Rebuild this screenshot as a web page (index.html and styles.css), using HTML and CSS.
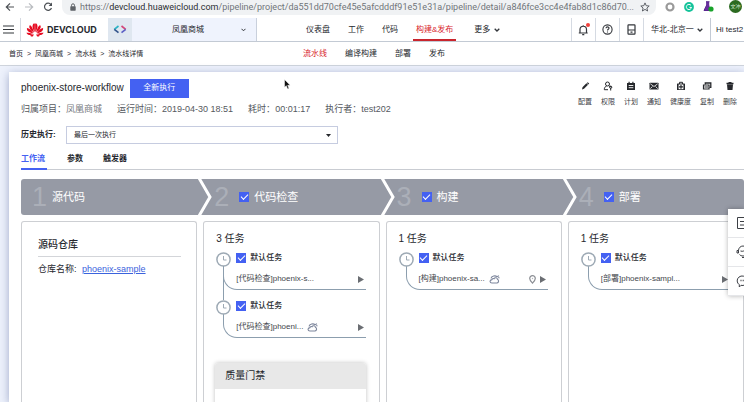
FILE: index.html
```html
<!DOCTYPE html>
<html lang="zh-CN">
<head>
<meta charset="utf-8">
<meta name="viewport" content="width=device-width, initial-scale=1">
<title>phoenix-store-workflow</title>
<link rel="stylesheet" href="styles.css">
</head>
<body>
<div class="app">
  <div class="browser">
    <div class="browser-nav">
      <button class="plain" aria-label="后退"><svg width="10" height="10" viewBox="0 0 10 10"><path d="M9 5H1.500M5 1.300 1.300 5 5 8.700" fill="none" stroke="#4c5055" stroke-width="1.200"/></svg></button>
      <button class="plain" aria-label="前进"><svg width="10" height="10" viewBox="0 0 10 10"><path d="M1 5H8.500M5 1.300 8.700 5 5 8.700" fill="none" stroke="#b9bcc0" stroke-width="1.200"/></svg></button>
      <button class="plain" aria-label="刷新"><svg width="10" height="10" viewBox="0 0 10 10"><path d="M8 2.600A3.600 3.600 0 1 0 8.500 6" fill="none" stroke="#4c5055" stroke-width="1.200"/><path d="M9 .6V4H5.600Z" fill="#4c5055"/></svg></button>
    </div>
    <div class="address">
      <svg width="6" height="8" viewBox="0 0 6 8"><path d="M1.500 3.500V2.300a1.500 1.500 0 0 1 3 0v1.200" fill="none" stroke="#5f6368"/><rect x=".3" y="3.200" width="5.400" height="4.500" rx=".6" fill="#5f6368"/></svg>
      <span class="url">https://<b>devcloud.huaweicloud.com</b>/pipeline/project/da551dd70cfe45e5afcdddf91e51e31a/pipeline/detail/a846fce3cc4e4fab8d1c86d70...</span>
      <svg class="star" width="10" height="10" viewBox="0 0 10 10"><path d="M5 .9 6.200 3.700 9.200 4 6.900 6 7.600 9 5 7.400 2.400 9 3.100 6 .8 4 3.800 3.700Z" fill="none" stroke="#50545a" stroke-width=".9"/></svg>
    </div>
    <div class="extensions">
      <svg width="10" height="10" viewBox="0 0 10 10"><circle cx="5" cy="5" r="3.500" fill="none" stroke="#9a9a9a" stroke-width="2.200"/></svg>
      <svg width="10" height="10" viewBox="0 0 10 10"><circle cx="5" cy="5" r="4.900" fill="#15c39a"/><path d="M7 3.400A2.600 2.600 0 1 0 7.500 5.400H5.500" fill="none" stroke="#fff" stroke-width="1"/></svg>
      <svg width="11" height="11" viewBox="0 0 11 11"><path d="M3 .7H6.500M3.700 1V4L1 9.500H7L5.700 4V1" fill="#6b2fa0" stroke="#5b2590"/><circle cx="8" cy="8" r="2.600" fill="#18a32a"/></svg>
      <span class="avatar">文冲</span>
    </div>
  </div>

  <header class="topbar">
    <button class="plain menu" aria-label="菜单"><svg width="11" height="9" viewBox="0 0 11 9"><path d="M0 1H11M0 4.500H11M0 8H11" stroke="#33363b" stroke-width="1.200"/></svg></button>
    <a class="brand" href="#">
      <svg width="18" height="14" viewBox="0 0 18 14"><g fill="#e60a20"><path d="M8.700 9.300C6.500 6 5.600 2.500 7.700.6c.5-.2 1.200-.2 1.200.4Z"/><path d="M9.300 9.300C11.500 6 12.400 2.500 10.300.6c-.5-.2-1.200-.2-1.200.4Z"/><path d="M8 9.700C4.400 7.500 2.500 4.500 3.600 2.500 5 1.500 7 6 8 9.700Z"/><path d="M10 9.700C13.600 7.500 15.500 4.500 14.400 2.500 13 1.500 11 6 10 9.700Z"/><path d="M7.300 10.300C2.500 9.800.4 7.200 1 5 3 5 5.500 7.500 7.300 10.300Z"/><path d="M10.700 10.300C15.500 9.800 17.600 7.200 17 5 15 5 12.500 7.500 10.700 10.300Z"/><path d="M7.300 11C4 13.200 1.500 11.700.4 9.700c2 0 4.800.4 6.900 1.300Z"/><path d="M10.700 11c3.300 2.200 5.800.7 6.900-1.300-2 0-4.800.4-6.900 1.300Z"/><path d="M7.900 11.300 7 13.200C5.800 14 4.500 13 4 12.400Z"/><path d="m10.100 11.300.9 1.900c1.200.8 2.500-.2 3-.8Z"/></g></svg>
      <span>DEVCLOUD</span>
    </a>
    <span class="product"><svg width="14" height="9" viewBox="0 0 14 9" fill="none" stroke-width="1.700"><path d="M5.500 1 1.300 4.300" stroke="#2bb3c4"/><path d="M1.300 4.300 5.500 7.600" stroke="#33558c"/><path d="M8.500 1 12.700 4.300" stroke="#d4467a"/><path d="M12.700 4.300 8.500 7.600" stroke="#5c5fc4"/></svg></span>
    <label class="picker project">
      <select aria-label="项目"><option>凤凰商城</option></select>
      <svg width="5" height="4" viewBox="0 0 5 4"><path d="M.5.8 2.500 2.800 4.500.8" fill="none" stroke="#33363b"/></svg>
    </label>
    <nav class="mainnav">
      <a href="#">仪表盘</a><a href="#">工作</a><a href="#">代码</a><a class="active" href="#">构建&amp;发布</a>
      <a class="more" href="#">更多 <svg width="6" height="4" viewBox="0 0 6 4"><path d="M.7.700 3 3 5.300.7" fill="none" stroke="#33363b" stroke-width="1.300"/></svg></a>
    </nav>
    <div class="tools">
      <button class="plain tool" aria-label="消息"><svg width="11" height="12" viewBox="0 0 11 12"><path d="M.8 9H9.700M2 9V5.500a3.200 3.200 0 0 1 6.500 0V9M4.200 10.700H6.300M5.200 1.200v1" fill="none" stroke="#33363b" stroke-width="1.200"/></svg><i class="dot"></i></button>
      <button class="plain tool" aria-label="帮助"><svg width="11" height="11" viewBox="0 0 11 11" fill="none" stroke="#33363b"><circle cx="5.500" cy="5.500" r="4.600" stroke-width="1.100"/><path d="M4 4.300C4 2.400 7 2.500 7 4.200 7 5.300 5.500 5.300 5.500 6.500M5.500 7.400V8.400" stroke-width="1.100"/></svg></button>
      <button class="plain tool" aria-label="移动端"><svg width="9" height="11" viewBox="0 0 9 11" fill="none" stroke="#33363b" stroke-width="1.200"><rect x="1" y=".8" width="7" height="9.300" rx=".6"/><path d="M1 6H8M3.500 8.200H5.500"/></svg></button>
      <label class="picker region">
        <select aria-label="区域"><option>华北-北京一</option></select>
        <svg width="6" height="4" viewBox="0 0 6 4"><path d="M.7.700 3 3 5.300.7" fill="none" stroke="#33363b" stroke-width="1.300"/></svg>
      </label>
      <a class="user" href="#">Hi test2</a>
    </div>
  </header>

  <div class="subbar">
    <nav class="crumbs"><a href="#">首页</a><span>&gt;</span><a href="#">凤凰商城</a><span>&gt;</span><a href="#">流水线</a><span>&gt;</span><span>流水线详情</span></nav>
    <nav class="subnav"><a class="active" href="#">流水线</a><a href="#">编译构建</a><a href="#">部署</a><a href="#">发布</a></nav>
  </div>

  <main class="sheet">
    <div class="heading">
      <div class="summary">
        <div class="titlebar"><h1>phoenix-store-workflow</h1><button class="primary">全新执行</button></div>
        <dl class="meta">
          <div><dt>归属项目：</dt><dd class="soft">凤凰商城</dd></div>
          <div><dt>运行时间：</dt><dd>2019-04-30 18:51</dd></div>
          <div><dt>耗时：</dt><dd>00:01:17</dd></div>
          <div><dt>执行者：</dt><dd>test202</dd></div>
        </dl>
      </div>
      <div class="actions">
        <button class="plain"><svg viewBox="0 0 10 10"><path d="M2 8.500 2.500 6.300 6.400 2.300 8 3.800 4 7.800ZM6.900 1.900 7.700 1.200 9.200 2.600 8.400 3.400Z" fill="#26282c"/></svg>配置</button>
        <button class="plain"><svg viewBox="0 0 10 10" fill="none" stroke="#26282c"><circle cx="4.500" cy="3" r="2"/><path d="M5 8.700H1.300C1.300 6.500 2.300 5.400 3.500 5.200M6 5 8.500 6"/><circle cx="7.700" cy="6.200" r="1.100"/><path d="M7.700 7V9.500"/></svg>权限</button>
        <button class="plain"><svg viewBox="0 0 10 10"><path d="M1 2H2.500V.8H3.700V2H6.300V.8H7.500V2H9V9H1Z" fill="#26282c"/><path d="M2.700 4.500H7.300M2.700 6.700H7.300" stroke="#fff" stroke-width=".9"/></svg>计划</button>
        <button class="plain"><svg viewBox="0 0 10 10"><rect x=".5" y="1.800" width="9" height="6.700" rx=".5" fill="#26282c"/><path d="M1.300 2.800 5 5.500 8.700 2.800M1.300 7.600 3.500 5.500M8.700 7.600 6.500 5.500" fill="none" stroke="#fff" stroke-width=".8"/></svg>通知</button>
        <button class="plain"><svg viewBox="0 0 10 10"><path d="M3.500 3V1.300H6.500V3" fill="none" stroke="#26282c"/><rect x="1" y="2.500" width="8" height="6.500" rx=".6" fill="#26282c"/><rect x="2.600" y="3.500" width="4.800" height="4.700" fill="#fff"/><path d="M5 3.900V7.800M3 5.800H7" stroke="#26282c" stroke-width="1.200"/></svg>健康度</button>
        <button class="plain"><svg viewBox="0 0 10 10" fill="none" stroke="#26282c"><path d="M3.300 3.500V2H8.800V6.400H7.500" stroke-width="1.300"/><path d="M1.500 4H7V8H1.500ZM2.500 6H6" stroke-width="1.200"/></svg>复制</button>
        <button class="plain"><svg viewBox="0 0 10 10"><path d="M1.500 1.800H3.500V1H6.500V1.800H8.500V3.200H1.500ZM2 3.600H8L7.500 9H2.500Z" fill="#26282c"/></svg>删除</button>
      </div>
    </div>

    <div class="history">
      <label for="history">历史执行:</label>
      <div class="picker dropdown">
        <select id="history"><option>最后一次执行</option></select>
        <svg width="5" height="3" viewBox="0 0 5 3"><path d="M0 0H5L2.500 3Z" fill="#26282c"/></svg>
      </div>
    </div>

    <nav class="tabs"><a class="active" href="#">工作流</a><a href="#">参数</a><a href="#">触发器</a></nav>

    <div class="board">
      <div class="stages">
        <div class="stage"><span class="num">1</span><span class="name">源代码</span></div>
        <div class="stage"><svg class="chevron" width="15" height="36" viewBox="0 0 15 36"><path d="M2 -1 13 18 2 37" fill="none" stroke="#fff" stroke-width="3"/></svg><span class="num">2</span><label class="name"><input type="checkbox" checked>代码检查</label></div>
        <div class="stage"><svg class="chevron" width="15" height="36" viewBox="0 0 15 36"><path d="M2 -1 13 18 2 37" fill="none" stroke="#fff" stroke-width="3"/></svg><span class="num">3</span><label class="name"><input type="checkbox" checked>构建</label></div>
        <div class="stage"><svg class="chevron" width="15" height="36" viewBox="0 0 15 36"><path d="M2 -1 13 18 2 37" fill="none" stroke="#fff" stroke-width="3"/></svg><span class="num">4</span><label class="name"><input type="checkbox" checked>部署</label></div>
      </div>
      <div class="columns">
        <section class="column source">
          <h2>源码仓库</h2>
          <p>仓库名称: <a href="#">phoenix-sample</a></p>
        </section>

        <section class="column">
          <h3>3 任务</h3>
          <div class="task chained">
            <svg class="clock" viewBox="0 0 15 15"><circle cx="7.500" cy="7.500" r="6.600"/><path d="M7.500 4V8H10.500"/></svg>
            <label class="task-title"><input type="checkbox" checked>默认任务</label>
            <div class="step"><span>[代码检查]phoenix-s...</span><button class="plain play" aria-label="执行"><svg width="6" height="7" viewBox="0 0 6 7"><path d="M0 0 6 3.500 0 7Z" fill="#6b6e73"/></svg></button></div>
          </div>
          <div class="task">
            <svg class="clock" viewBox="0 0 15 15"><circle cx="7.500" cy="7.500" r="6.600"/><path d="M7.500 4V8H10.500"/></svg>
            <label class="task-title"><input type="checkbox" checked>默认任务</label>
            <div class="step"><span>[代码检查]phoeni...</span><svg width="11" height="9" viewBox="0 0 11 9" fill="none" stroke="#7d869c" stroke-width="1.100"><path d="M3 8H8A2 2 0 0 0 8.500 4.300C8.200 2.400 5.600 2.200 5 3.800 3.800 3.200 3.100 3.900 3 4.600.3 5 .5 7.900 3 8ZM2 3.300C2.500.8 6.500.300 8 1.700L10 .8M9.200 2.500 10.500 3"/></svg><button class="plain play" aria-label="执行"><svg width="6" height="7" viewBox="0 0 6 7"><path d="M0 0 6 3.500 0 7Z" fill="#6b6e73"/></svg></button></div>
          </div>
          <div class="gate"><h4>质量门禁</h4></div>
        </section>

        <section class="column">
          <h3>1 任务</h3>
          <div class="task">
            <svg class="clock" viewBox="0 0 15 15"><circle cx="7.500" cy="7.500" r="6.600"/><path d="M7.500 4V8H10.500"/></svg>
            <label class="task-title"><input type="checkbox" checked>默认任务</label>
            <div class="step"><span>[构建]phoenix-sa...</span><svg width="11" height="9" viewBox="0 0 11 9" fill="none" stroke="#7d869c" stroke-width="1.100"><path d="M3 8H8A2 2 0 0 0 8.500 4.300C8.200 2.400 5.600 2.200 5 3.800 3.800 3.200 3.100 3.900 3 4.600.3 5 .5 7.900 3 8ZM2 3.300C2.500.8 6.500.300 8 1.700L10 .8M9.200 2.500 10.500 3"/></svg><svg class="pin" width="7" height="9" viewBox="0 0 7 9"><path d="M3.500 8.200C1.800 6.400.7 5 .7 3.500a2.800 2.800 0 0 1 5.600 0C6.300 5 5.200 6.400 3.500 8.200Z" fill="none" stroke="#8b8e94" stroke-width="1.200"/><circle cx="3.500" cy="3.500" r=".7" fill="#b5b8bd"/></svg><button class="plain play" aria-label="执行"><svg width="6" height="7" viewBox="0 0 6 7"><path d="M0 0 6 3.500 0 7Z" fill="#6b6e73"/></svg></button></div>
          </div>
        </section>

        <section class="column">
          <h3>1 任务</h3>
          <div class="task">
            <svg class="clock" viewBox="0 0 15 15"><circle cx="7.500" cy="7.500" r="6.600"/><path d="M7.500 4V8H10.500"/></svg>
            <label class="task-title"><input type="checkbox" checked>默认任务</label>
            <div class="step"><span>[部署]phoenix-sampl...</span><button class="plain play" aria-label="执行"><svg width="6" height="7" viewBox="0 0 6 7"><path d="M0 0 6 3.500 0 7Z" fill="#6b6e73"/></svg></button></div>
          </div>
        </section>
      </div>
    </div>
  </main>

  <aside class="float">
    <button class="plain" aria-label="反馈"><svg width="14" height="14" viewBox="0 0 14 14" fill="none" stroke="#3c3f45"><path d="M12.500 1.500H1.500V12.500H12.500ZM4 5.500H10M4 9H10"/></svg></button>
    <button class="plain" aria-label="客服"><svg width="14" height="14" viewBox="0 0 14 14" fill="none" stroke="#3c3f45"><path d="M2.500 8V5.500a4.500 4.500 0 0 1 9 0V8M2.500 5.500H1V8H2.500ZM3.500 9.500C5 11.500 9 11.500 10.500 9.500M4.500 6C7 7 9 5.500 9 4M6 12.500H9"/></svg></button>
    <button class="plain" aria-label="咨询"><svg width="14" height="14" viewBox="0 0 14 14" fill="none" stroke="#3c3f45"><path d="M5 11.300 3.300 13V10.700A5 4.800 0 1 1 7 11.500Z"/><path d="M4.500 6.500H5.500M6.700 6.500H7.700M9 6.500H10" stroke-width="1.300"/></svg></button>
  </aside>
  <svg class="cursor" width="7" height="11" viewBox="0 0 7 11"><path d="M.5.500V8.300L2.300 6.700 3.600 10 5 9.400 3.700 6.300H6.200Z" fill="#111" stroke="#fff" stroke-width=".5"/></svg>
</div>
</body>
</html>
```

FILE: styles.css
```css
* { box-sizing: border-box; }

body {
  margin: 0;
  background: #eef2fc;
  color: #26282e;
  font: 8px/12px "Liberation Sans", "Noto Sans CJK SC", sans-serif;
}

h1, h2, h3, h4, p, dl, dd { margin: 0; font-weight: 400; }
a { color: inherit; text-decoration: none; }
svg { flex: none; display: block; }
button, select, input { font: inherit; color: inherit; margin: 0; }

.plain {
  display: flex;
  align-items: center;
  justify-content: center;
  padding: 0;
  border: 0;
  background: none;
}

.app {
  position: relative;
  display: flex;
  flex-direction: column;
  height: 100vh;
  overflow: hidden;
}

/* Browser chrome */
.browser {
  display: flex;
  flex: none;
  height: 18px;
  padding-bottom: 3px;
  background: #fff;
}
.browser-nav { display: flex; gap: 9px; width: 62px; padding-left: 5px; padding-bottom: 2px; }
.address {
  display: flex;
  flex: 1;
  align-items: center;
  gap: 4px;
  min-width: 0;
  padding: 0 6px 2px 8px;
  border-radius: 0 0 8px 8px;
  background: #f0f2f4;
}
.url {
  flex: 1;
  overflow: hidden;
  color: #70757a;
  font-family: Roboto, sans-serif;
  font-size: 9px;
  white-space: nowrap;
}
.url b { color: #2b2e33; font-weight: 400; }
.extensions { display: flex; align-items: center; gap: 9px; padding: 0 2px 2px 9px; }
.avatar {
  width: 13px;
  height: 13px;
  margin-left: 6px;
  border-radius: 50%;
  background: #2c6a20;
  color: #d9ecd4;
  font-size: 5px;
  line-height: 13px;
  text-align: center;
}

/* Top bar */
.topbar {
  display: flex;
  flex: none;
  height: 24px;
  border-bottom: 1px solid #c3cad4;
  background: #fff;
  white-space: nowrap;
}
.menu { width: 21px; padding-right: 4px; border-right: 1px solid #d5dae2; }
.brand {
  display: flex;
  align-items: center;
  gap: 3px;
  width: 87px;
  padding-left: 5px;
  font: 700 9px/12px Inter, sans-serif;
}
.product { display: flex; align-items: center; justify-content: center; width: 24px; background: #dfe7f0; }
.picker { position: relative; display: flex; align-items: center; }
.picker select {
  width: 100%;
  height: 100%;
  padding: 0;
  border: 0;
  border-radius: 0;
  outline: 0;
  background: none;
  appearance: none;
}
.picker svg { position: absolute; right: 7px; pointer-events: none; }
.project { width: 125px; border-right: 1px solid #c9d0dc; background: #eff3fd; }
.project select { padding-right: 12px; text-align: center; text-align-last: center; }
.project svg { right: 10px; }
.mainnav { display: flex; gap: 12px; padding-left: 46px; }
.mainnav a { display: flex; align-items: center; gap: 4px; padding: 2px 3px 0; border-bottom: 2px solid transparent; }
.mainnav .active { border-color: #c9252d; }
.mainnav .more { padding-left: 6px; }
.active { color: #d8232b; }
.tools { display: flex; margin-left: auto; }
.tool { position: relative; width: 24px; border-left: 1px solid #d5dae2; }
.dot {
  position: absolute;
  top: 5px;
  right: 5px;
  width: 4px;
  height: 4px;
  border-radius: 50%;
  background: #f0413c;
}
.region { width: 67px; border-left: 1px solid #d5dae2; }
.region select { padding-left: 7px; }
.user { min-width: 34px; padding: 6px 0 0 5px; border-left: 1px solid #c3cad4; }

/* Secondary bar */
.subbar {
  display: flex;
  flex: none;
  align-items: center;
  height: 24px;
  border-bottom: 1px solid #cfd4dc;
  background: #fff;
}
.crumbs { display: flex; gap: 4px; width: 303px; padding-left: 9px; font-size: 7px; }
.subnav { display: flex; gap: 18px; }

/* Content sheet */
.sheet {
  display: flex;
  flex: 1;
  flex-direction: column;
  min-height: 0;
  margin: 6px 0 0 9px;
  background: #fff;
  box-shadow: 0 2px 9px rgba(60, 80, 140, 0.45);
}
.heading { display: flex; justify-content: space-between; padding: 6px 7px 0 12px; }
.titlebar { display: flex; align-items: center; gap: 6px; height: 20px; }
h1 { font-size: 10px; }
.primary {
  width: 59px;
  height: 19px;
  padding: 0;
  border: 0;
  background: #4461f2;
  color: #fff;
}
.meta { display: flex; gap: 15px; margin-top: 5px; color: #55585e; font-size: 9px; }
.meta div { display: flex; }
.soft { color: #777a80; }
.actions { display: flex; align-items: flex-start; gap: 9px; padding-top: 3px; }
.actions button { flex-direction: column; gap: 5px; color: #3d4045; font-size: 7px; }
.actions svg { width: 10px; height: 10px; }

.history { display: flex; align-items: center; gap: 9px; height: 18px; margin: 11px 12px 0; }
.history label { width: 36px; font-weight: 700; white-space: nowrap; }
.dropdown { width: 272px; height: 18px; border: 1px solid #c6cce0; font-size: 7px; }
.dropdown select { padding-left: 7px; }
.dropdown svg { right: 6px; }

.tabs {
  display: flex;
  gap: 20px;
  height: 26px;
  margin-left: 12px;
  border-bottom: 1px solid #c9ccd2;
  font-weight: 700;
}
.tabs a { padding-top: 9px; }
.tabs .active { height: 26px; border-bottom: 2px solid #4461f2; color: #4461f2; padding-right: 2px; }

/* Pipeline board */
.board { display: flex; flex: 1; flex-direction: column; gap: 6px; min-height: 0; padding: 9px 0 0 12px; }
.stages, .columns { display: grid; grid-template-columns: repeat(4, minmax(0, 1fr)); column-gap: 6px; }
.stages { border-radius: 3px; background: #969aa5; overflow: hidden; }
.stage { position: relative; display: flex; align-items: center; height: 36px; padding-left: 11px; color: #fff; }
.chevron { position: absolute; top: 0; left: -6px; }
.num { width: 20px; color: #abafb8; font-size: 27px; line-height: 36px; }
.name { display: flex; align-items: center; gap: 5px; font-size: 11px; }
.stage label { padding-left: 5px; }

input[type="checkbox"] {
  display: flex;
  flex: none;
  align-items: center;
  justify-content: center;
  width: 10px;
  height: 10px;
  background: #4461f2;
  appearance: none;
}
input[type="checkbox"]:checked::after {
  content: "";
  width: 6px;
  height: 3px;
  margin-bottom: 2px;
  border: solid #fff;
  border-width: 0 0 1px 1px;
  transform: rotate(-45deg);
}

.columns { flex: 1; min-height: 0; }
.column {
  padding: 11px 13px 0 12px;
  border: 1px solid #cdcfd3;
  border-bottom: 0;
  border-radius: 3px 3px 0 0;
  overflow: hidden;
}
.source { padding: 16px 15px 0 16px; }
h2 { padding-bottom: 4px; border-bottom: 1px solid #d3d5d9; font-size: 10px; line-height: 14px; font-weight: 500; }
.source p { margin-top: 6px; font-size: 9px; }
.source p a { margin-left: 3px; color: #3b63dd; text-decoration: underline; }
h3 { font-size: 10px; }

.task { position: relative; height: 48px; padding: 8px 0 0 20px; }
.clock { position: absolute; top: 7px; left: 0; width: 15px; height: 15px; fill: #fff; stroke: #9eaab5; stroke-width: 1.5; }
.clock path { stroke-width: 1; fill: none; }
.task-title { display: flex; align-items: center; gap: 4px; height: 10px; font-weight: 500; }
.task::before {
  content: "";
  position: absolute;
  top: 21px;
  right: 0;
  left: 7px;
  height: 23px;
  border: solid #8c9eae;
  border-width: 0 0 1px 1px;
  border-radius: 0 0 0 14px;
}
.chained::after {
  content: "";
  position: absolute;
  top: 21px;
  left: 7px;
  height: 34px;
  border-left: 1px solid #8c9eae;
}
.step { position: relative; display: flex; align-items: center; gap: 4px; margin-top: 10px; padding-right: 2px; color: #44474d; white-space: nowrap; }
.play, .pin { margin-left: auto; }
.pin + .play { margin-left: 0; }

.gate { height: 80px; margin-top: 22px; margin-left: -1px; border-radius: 3px; box-shadow: 0 0 4px rgba(0, 0, 0, 0.25); }
.gate h4 { padding: 7px 10px; border-radius: 3px 3px 0 0; background: #e8e8e8; font-size: 10px; }

/* Overlays */
.float {
  position: absolute;
  top: 209px;
  right: 0;
  display: flex;
  flex-direction: column;
  width: 16px;
  background: #fff;
  box-shadow: 0 0 5px rgba(0, 0, 0, 0.3);
  overflow: hidden;
}
.float button { height: 29px; justify-content: flex-start; padding-left: 8px; border-bottom: 1px solid #e5e6e9; }
.cursor { position: absolute; top: 79px; left: 284px; }
```
